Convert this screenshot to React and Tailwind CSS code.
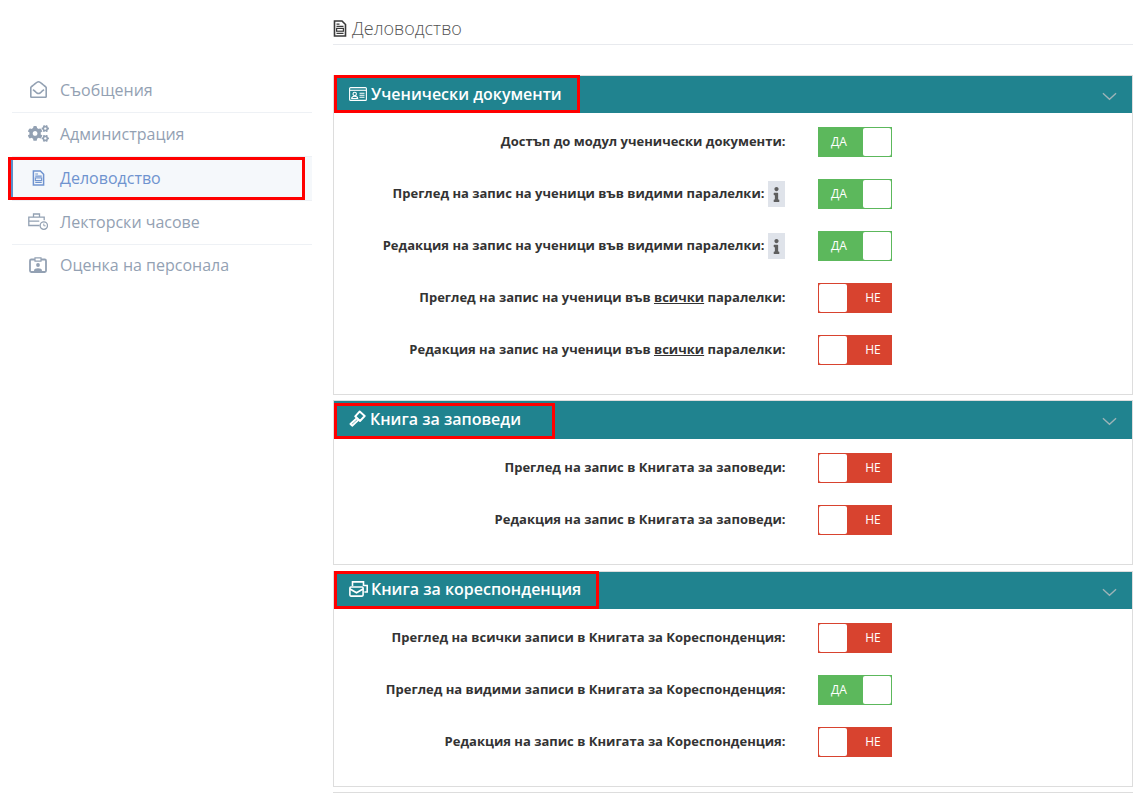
import React from "react";
import { FaCogs, FaRegEnvelopeOpen, FaInfo } from "react-icons/fa";

const DocIcon = ({ className }) => (
  <svg viewBox="0 0 14 17" className={className} fill="none" stroke="currentColor" strokeWidth="1.6">
    <path d="M1.500 1h7.500l3.500 3.500V16h-11z" />
    <path d="M3.500 4.200h3M3.500 6.400h7M3.500 13.300h7" strokeWidth="1.300" />
    <rect x="3.600" y="8.400" width="6.800" height="2.800" strokeWidth="1.200" />
  </svg>
);

const CaseClock = ({ className }) => (
  <svg viewBox="0 0 20 17" className={className} fill="none" stroke="currentColor" strokeWidth="1.300">
    <path d="M11.500 12.500H.8V4.200h15.400v3" />
    <path d="M5.500 4V1h6v3M.8 8.200h10.500" />
    <circle cx="15.800" cy="12.600" r="3.700" />
    <path d="M15.800 10.600v2.200h1.800" strokeWidth="1" />
  </svg>
);

const BadgeIcon = ({ className }) => (
  <svg viewBox="0 0 18 16" className={className}>
    <path d="M2.200 2.500h13.600c.7 0 1.200.5 1.200 1.200v10.100c0 .7-.5 1.200-1.200 1.200H2.200c-.7 0-1.200-.5-1.200-1.200V3.700c0-.7.5-1.200 1.200-1.200z" fill="none" stroke="currentColor" strokeWidth="1.800" />
    <path d="M6 .8h6v3.400H6z" fill="#fff" stroke="currentColor" strokeWidth="1.200" />
    <circle cx="9" cy="8" r="1.900" fill="currentColor" />
    <path d="M5 15v-1.500c0-1.500 1.800-2.300 4-2.300s4 .8 4 2.300V15z" fill="currentColor" />
  </svg>
);

const IdCard = ({ className }) => (
  <svg viewBox="0 0 18 14" className={className} fill="none" stroke="currentColor" strokeWidth="1.100">
    <rect x=".6" y=".6" width="16.800" height="12.800" rx="1" />
    <path d="M.6 3.300h16.800" />
    <circle cx="5.700" cy="7" r="1.700" />
    <path d="M2.700 11.500c0-1.500 1.300-2.300 3-2.300s3 .8 3 2.300z" />
    <path d="M10.500 6.200h5M10.500 8.200h5M10.500 10.200h5" />
  </svg>
);

const Gavel = ({ className }) => (
  <svg viewBox="0 0 17 17" className={className} fill="none" stroke="currentColor" strokeWidth="1.900" strokeLinejoin="round">
    <path d="M6.200 6.300 10.700 1.500l5 4.500-4.700 5z" />
    <path d="M7.800 8.200 1.500 14l1.700 1.700 6.300-5.800" />
  </svg>
);

const MailStack = ({ className }) => (
  <svg viewBox="0 0 19 16" className={className} fill="none" stroke="currentColor" strokeWidth="1.600">
    <path d="M3.500 5V.9h11V5M14.500 4.500h3.700v6.500h-2.800" />
    <rect x=".9" y="6" width="13.200" height="9.100" rx="1" />
    <path d="M1 8l6.500 3.800L14 8" />
  </svg>
);

const Chevron = () => (
  <svg viewBox="0 0 16 9" className="w-[15px] h-[9px] text-[#9fb4b8]" fill="none" stroke="currentColor" strokeWidth="1.400">
    <path d="M1 1l7 6.500L15 1" />
  </svg>
);

const Toggle = ({ on }) =>
  on ? (
    <div className="w-[74px] h-[30px] flex bg-[#5cb85c] border border-[#5cb85c] shrink-0">
      <div className="w-[40px] text-center text-[12px] leading-[28px] text-white">ДА</div>
      <div className="ml-[4px] flex-1 bg-white rounded-[2px]" />
    </div>
  ) : (
    <div className="w-[74px] h-[30px] flex bg-[#d8432f] border border-[#d8432f] shrink-0">
      <div className="w-[28px] bg-white rounded-[2px]" />
      <div className="flex-1 text-center text-[12px] leading-[28px] text-white pl-[8px]">НЕ</div>
    </div>
  );

const Row = ({ label, on, info }) => (
  <div className="flex items-center h-[30px] mb-[22px]">
    <div className="w-[451.5px] shrink-0 flex items-center justify-end text-[13px] font-bold text-[#333]">
      <span>{label}</span>
      {info && (
        <span className="ml-[3.5px] mr-[0.5px] w-[17px] h-[26px] bg-[#dfe3ea] flex items-center justify-center text-[#5f5f5f]">
          <FaInfo className="w-[9px] h-[15px]" />
        </span>
      )}
    </div>
    <div className="ml-[32.5px]">
      <Toggle on={on} />
    </div>
  </div>
);

const Panel = ({ icon, title, headerClass, titleClass, boxClass, panelClass, rows }) => (
  <div className={"border border-[#ddd] " + panelClass}>
    <div className={"relative bg-[#20838f] flex items-center justify-between " + headerClass}>
      <div className={"flex items-center pl-[15px] text-white text-[16px] font-semibold whitespace-nowrap " + titleClass}>
        {icon}
        <span>{title}</span>
      </div>
      <div className="flex items-center pr-[15px] pt-[3px]">
        <Chevron />
      </div>
      <div className={"absolute left-0 border-[3px] border-[#f00] pointer-events-none " + boxClass} />
    </div>
    <div className="pt-[14px] pb-[7px]">
      {rows.map((r, i) => (
        <Row key={i} {...r} />
      ))}
    </div>
  </div>
);

const NavItem = ({ icon, label, active, last }) => (
  <div
    className={
      "relative flex items-center border-b " +
      (last ? "h-[44px] pb-[4px] border-transparent" : "h-[44px] pb-[2px] border-[#eef1f5]") +
      (active ? " bg-[#f5f8fb]" : "")
    }
  >
    <div className={"w-[48px] pl-[4px] flex justify-center shrink-0 " + (active ? "text-[#6f93cf]" : "text-[#93a1b3]")}>{icon}</div>
    <span className={"text-[16px] " + (active ? "text-[#6f93cf]" : "text-[#93a1b3]")}>{label}</span>
    {active && (
      <div className="absolute left-[-4px] top-0 w-[297px] h-[43px] border-[3px] border-[#f00] pointer-events-none">
        <div className="absolute left-0 top-0 bottom-0 w-[2px] bg-[#5b8fc9]" />
      </div>
    )}
  </div>
);

export default function App() {
  return (
    <div className="flex h-[793px] overflow-hidden bg-white font-['Open_Sans',sans-serif]">
      <aside className="w-[300px] ml-[12px] pt-[69px] shrink-0">
        <NavItem icon={<FaRegEnvelopeOpen className="w-[17px] h-[17px]" />} label="Съобщения" />
        <NavItem icon={<FaCogs className="w-[21px] h-[17px]" />} label="Администрация" />
        <NavItem icon={<DocIcon className="w-[13px] h-[16px]" />} label="Деловодство" active />
        <NavItem icon={<CaseClock className="w-[20px] h-[17px]" />} label="Лекторски часове" />
        <NavItem icon={<BadgeIcon className="w-[18px] h-[16px]" />} label="Оценка на персонала" last />
      </aside>
      <main className="ml-[21px] w-[800px] shrink-0">
        <div className="h-[45px] pt-[13px] border-b border-[#e8eaee] flex items-center gap-[5px] mb-[30px]">
          <DocIcon className="w-[14px] h-[17px] text-[#3a3a3a]" />
          <span className="text-[18px] font-light text-[#555]">Деловодство</span>
        </div>
        <Panel
          icon={<IdCard className="w-[18px] h-[14px] mr-[4px]" />}
          title="Ученически документи"
          panelClass="mb-[5px]"
          headerClass="h-[37px]"
          titleClass="pb-[2px]"
          boxClass="-top-[1px] w-[246px] h-[38px]"
          rows={[
            { label: "Достъп до модул ученически документи:", on: true },
            { label: "Преглед на запис на ученици във видими паралелки:", on: true, info: true },
            { label: "Редакция на запис на ученици във видими паралелки:", on: true, info: true },
            { label: <>Преглед на запис на ученици във <u>всички</u> паралелки:</>, on: false },
            { label: <>Редакция на запис на ученици във <u>всички</u> паралелки:</>, on: false },
          ]}
        />
        <Panel
          icon={<Gavel className="w-[17px] h-[17px] mr-[4px]" />}
          title="Книга за заповеди"
          panelClass="mb-[6px]"
          headerClass="h-[38px]"
          titleClass="pb-[3px]"
          boxClass="top-[2px] w-[221px] h-[36px]"
          rows={[
            { label: "Преглед на запис в Книгата за заповеди:", on: false },
            { label: "Редакция на запис в Книгата за заповеди:", on: false },
          ]}
        />
        <Panel
          icon={<MailStack className="w-[19px] h-[16px] mr-[3px]" />}
          title="Книга за кореспонденция"
          panelClass="mb-[5px]"
          headerClass="h-[37px]"
          titleClass="pb-[4px]"
          boxClass="-top-[1px] w-[265px] h-[38px]"
          rows={[
            { label: "Преглед на всички записи в Книгата за Кореспонденция:", on: false },
            { label: "Преглед на видими записи в Книгата за Кореспонденция:", on: true },
            { label: "Редакция на запис в Книгата за Кореспонденция:", on: false },
          ]}
        />
        <div className="h-px bg-[#ddd]" />
      </main>
    </div>
  );
}
